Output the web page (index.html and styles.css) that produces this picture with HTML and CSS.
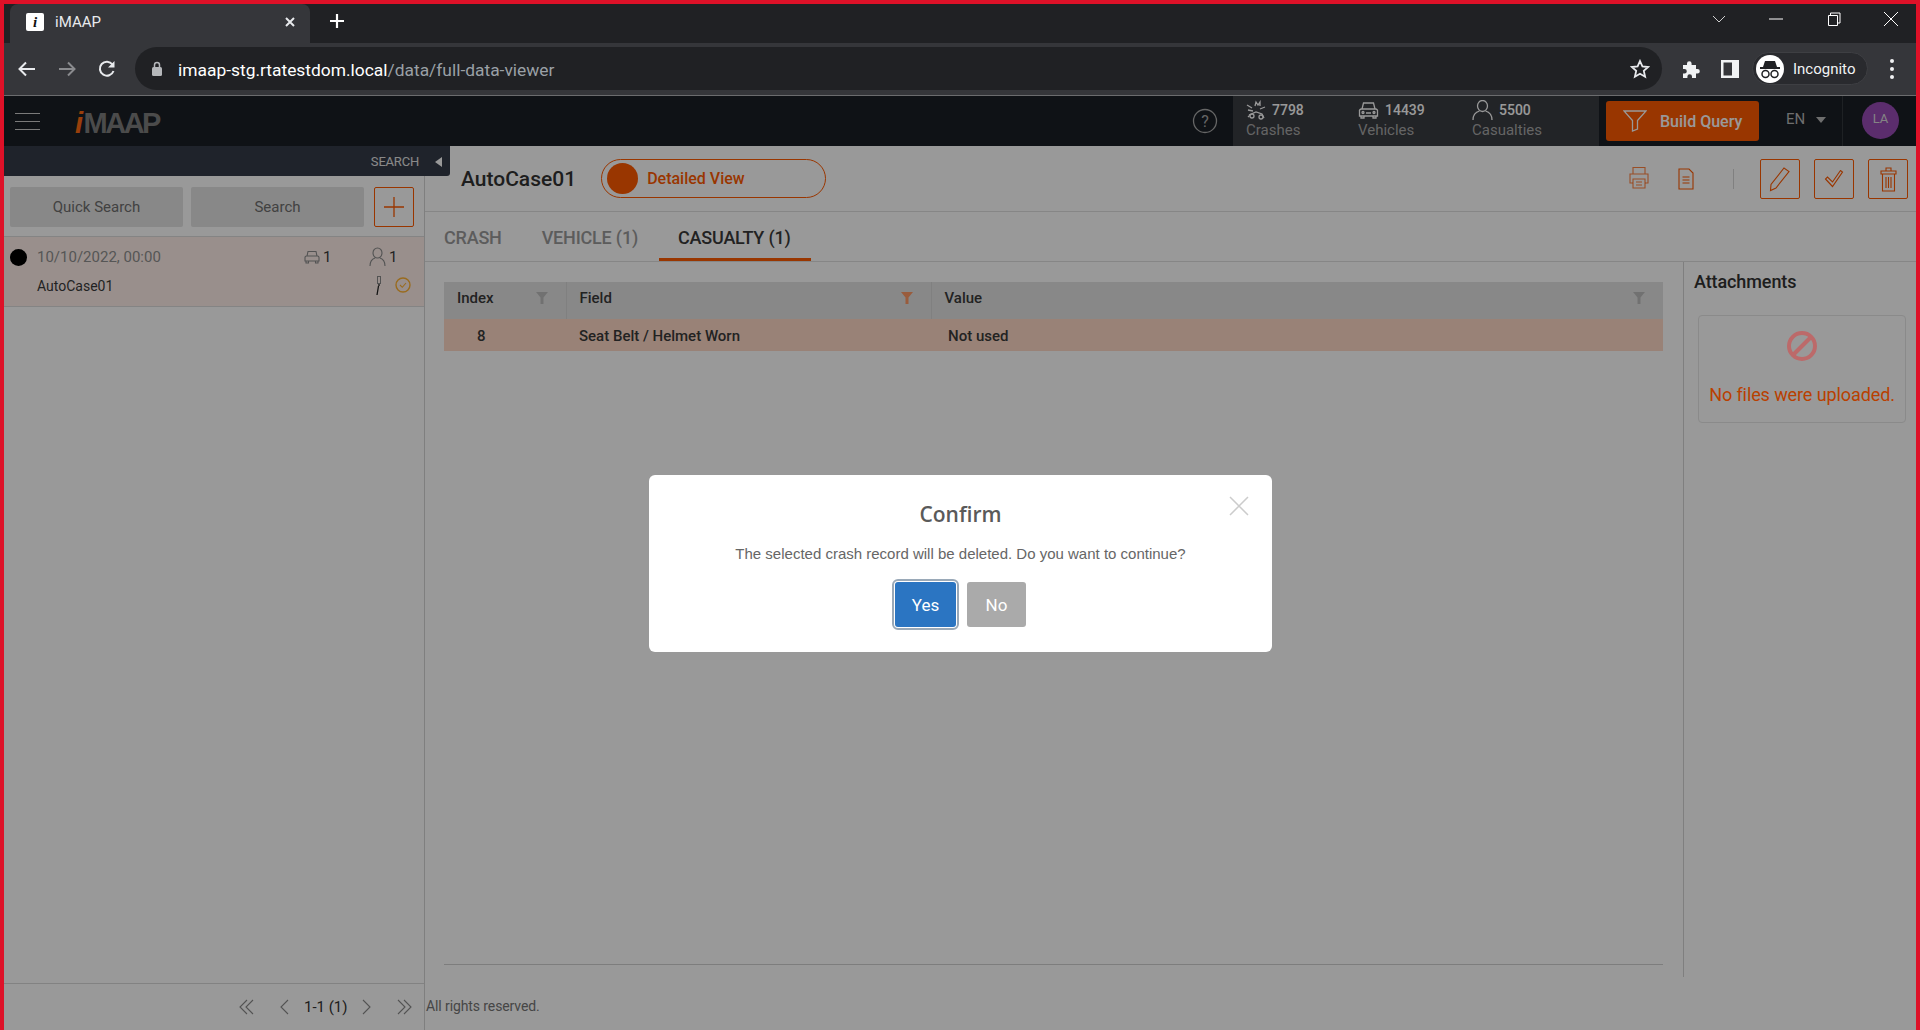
FILE: index.html
```html
<!DOCTYPE html>
<html>

<head>
    <title>iMAAP</title>
    <link rel="stylesheet" href="styles.css">
</head>

<body>
    <!-- browser chrome -->
    <div class="tabstrip">
        <div class="tab">
            <span class="favicon">i</span>
            <span class="tab-title">iMAAP</span>
            <svg class="tab-close" width="12" height="12" viewBox="0 0 12 12"><path d="M2 2l8 8M10 2l-8 8" stroke="#e8eaed" stroke-width="2" /></svg>
        </div>
        <svg class="new-tab" width="16" height="16" viewBox="0 0 16 16"><path d="M8 1v14M1 8h14" stroke="#fff" stroke-width="2.2" /></svg>
        <div class="win-btns">
            <svg width="14" height="10" viewBox="0 0 14 10"><path d="M1 2l6 6 6-6" fill="none" stroke="#d0d0d0" /></svg>
            <svg width="14" height="10" viewBox="0 0 14 10"><path d="M0 5h14" stroke="#fff" /></svg>
            <svg width="14" height="14" viewBox="0 0 14 14"><path d="M1.500 3.500h9v10h-9zM3.500 3.500v-2.500h9.500v10h-2.500" fill="none" stroke="#fff" /></svg>
            <svg width="14" height="14" viewBox="0 0 14 14"><path d="M0 0l14 14M14 0l-14 14" stroke="#fff" /></svg>
        </div>
    </div>
    <div class="toolbar">
        <svg class="nav-icon" width="18" height="16" viewBox="0 0 18 16"><path d="M17 8H2M8 1.500L1.500 8 8 14.500" fill="none" stroke="#e8eaed" stroke-width="2" /></svg>
        <svg class="nav-icon" width="18" height="16" viewBox="0 0 18 16"><path d="M1 8h15M10 1.500L16.500 8 10 14.500" fill="none" stroke="#8a8b8e" stroke-width="2" /></svg>
        <svg class="nav-icon" width="18" height="18" viewBox="0 0 18 18"><path d="M15.500 11a7 7 0 1 1-1-6.500" fill="none" stroke="#e8eaed" stroke-width="2" /><path d="M16.500 1v6.500H10z" fill="#e8eaed" /></svg>
        <div class="omnibox">
            <svg width="12" height="16" viewBox="0 0 12 16"><rect x="1" y="6" width="10" height="9" rx="1.500" fill="#b5b7ba" /><path d="M3.500 6V4a2.500 2.500 0 0 1 5 0v2" fill="none" stroke="#b5b7ba" stroke-width="1.500" /></svg>
            <span class="url">imaap-stg.rtatestdom.local<span class="url-path">/data/full-data-viewer</span></span>
            <svg class="star" width="20" height="20" viewBox="0 0 20 20"><path d="M10 2l2.400 5.400 5.800.6-4.400 3.900 1.300 5.800-5.100-3-5.100 3 1.300-5.800L1.800 8l5.800-.6z" fill="none" stroke="#e8eaed" stroke-width="1.800" /></svg>
        </div>
        <svg class="puzzle" width="20" height="20" viewBox="0 0 20 20"><path d="M2 6h4V4.500a2.300 2.300 0 0 1 4.600 0V6h4.400v4h1.500a2.300 2.300 0 0 1 0 4.600H15V19h-4v-1.500a2.300 2.300 0 0 0-4.600 0V19H2v-4.500h1.500a2.300 2.300 0 0 0 0-4.600H2z" fill="#f1f3f4" /></svg>
        <svg class="panel-icon" width="18" height="18" viewBox="0 0 18 18"><path fill-rule="evenodd" d="M0 0h18v18H0zM2.500 2.500v13H11v-13z" fill="#f1f3f4" /></svg>
        <div class="incognito">
            <span class="incog-face">
                <svg width="24" height="24" viewBox="0 0 24 24"><path d="M7 4h10l2 6H5z" fill="#202124" /><path d="M2 11h20" stroke="#202124" stroke-width="2" /><circle cx="7.500" cy="17" r="3.500" fill="none" stroke="#202124" stroke-width="1.500" /><circle cx="16.500" cy="17" r="3.500" fill="none" stroke="#202124" stroke-width="1.500" /></svg>
            </span>
            <span>Incognito</span>
        </div>
        <div class="kebab"><i></i><i></i><i></i></div>
    </div>

    <!-- app -->
    <div class="app">
        <header class="app-header">
            <div class="hamburger"><i></i><i></i><i></i></div>
            <div class="logo"><span>i</span>MAAP</div>
            <svg class="help" width="26" height="26" viewBox="0 0 26 26"><circle cx="13" cy="13" r="11.500" fill="none" stroke="#aaa" stroke-width="1.300" /><text x="13" y="18.500" text-anchor="middle" font-family="Roboto" font-size="16" fill="#aaa">?</text></svg>
            <div class="stats">
                <div class="stat stat-crash">
                    <div class="stat-num">
                        <svg width="20" height="20" viewBox="0 0 20 20"><g fill="none" stroke="#fff" stroke-width="1.300"><path d="M1 5l5 3M2 10l5 1M9 6l1-4 2 3 2-3 0 4M14 9l5-2M3 15l7-3 6 2 2 4M2 17l2-2" /><circle cx="6" cy="16" r="2" /><circle cx="15" cy="17" r="2" /></g></svg>
                        7798
                    </div>
                    <div class="stat-label">Crashes</div>
                </div>
                <div class="stat stat-vehicle">
                    <div class="stat-num">
                        <svg width="21" height="20" viewBox="0 0 21 20"><g fill="none" stroke="#fff" stroke-width="1.300"><path d="M4 9l1.500-6h10L17 9M1.500 11.500a2 2 0 0 1 2-2.500h14a2 2 0 0 1 2 2.500V16h-18zM3 16v2h3v-2M15 16v2h3v-2M8 13h5" /><circle cx="5" cy="12.500" r="1" /><circle cx="16" cy="12.500" r="1" /></g></svg>
                        14439
                    </div>
                    <div class="stat-label">Vehicles</div>
                </div>
                <div class="stat">
                    <div class="stat-num">
                        <svg width="21" height="20" viewBox="0 0 21 20"><g fill="none" stroke="#fff" stroke-width="1.300"><ellipse cx="10.500" cy="6" rx="5" ry="5.500" /><path d="M1 20c0-5 3-8 6.500-9M20 20c0-5-3-8-6.500-9" /></g></svg>
                        5500
                    </div>
                    <div class="stat-label">Casualties</div>
                </div>
            </div>
            <button class="build-query">
                <svg width="24" height="22" viewBox="0 0 24 22"><path d="M1 1h22l-8.500 9.500V19l-5 2V10.500z" fill="none" stroke="#fff" stroke-width="1.300" /></svg>
                Build Query
            </button>
            <div class="lang">EN<span class="caret"></span></div>
            <div class="user"><span class="avatar">LA</span></div>
        </header>

        <div class="app-body">
            <aside class="sidebar">
                <div class="search-bar">
                    <span>SEARCH</span>
                    <span class="collapse-arrow"></span>
                </div>
                <div class="search-btns">
                    <button class="grey-btn">Quick Search</button>
                    <button class="grey-btn">Search</button>
                    <button class="plus-btn">
                        <svg width="20" height="20" viewBox="0 0 20 20"><path d="M10 0v20M0 10h20" stroke="#ff5a00" stroke-width="1.300" /></svg>
                    </button>
                </div>
                <div class="case-row">
                    <div class="case-line">
                        <span class="dot"></span>
                        <span class="case-date">10/10/2022, 00:00</span>
                        <span class="case-count count-car">
                            <svg width="16" height="14" viewBox="0 0 16 14"><g fill="none" stroke="#8a8a8a" stroke-width="1.100"><path d="M3 6l1-4.500h8L13 6M1 7.500A1.500 1.500 0 0 1 2.500 6h11A1.500 1.500 0 0 1 15 7.500V11H1zM2 11v2h2.500v-2M11.500 11v2H14v-2" /></g></svg>
                            1
                        </span>
                        <span class="case-count">
                            <svg width="17" height="20" viewBox="0 0 17 20"><g fill="none" stroke="#8a8a8a" stroke-width="1.100"><ellipse cx="8.500" cy="6" rx="4.500" ry="5" /><path d="M1 19c0-4 2-7 5-8M16 19c0-4-2-7-5-8" /></g></svg>
                            1
                        </span>
                    </div>
                    <div class="case-line case-line2">
                        <span class="case-name">AutoCase01</span>
                        <svg class="belt" width="8" height="20" viewBox="0 0 8 20"><rect x="3.500" y="0.500" width="3" height="7" fill="none" stroke="#8a8a8a" /><path d="M5 8v2M4.500 10L3 19" stroke="#222" stroke-width="1.300" /></svg>
                        <svg class="case-ok" width="16" height="16" viewBox="0 0 16 16"><circle cx="8" cy="8" r="7" fill="none" stroke="#ffb233" stroke-width="1.400" /><path d="M5 8l2.300 2.300L11 6" fill="none" stroke="#ffb233" stroke-width="1.100" /></svg>
                    </div>
                </div>
                <div class="pager">
                    <svg width="16" height="16" viewBox="0 0 16 16"><path d="M8 1L1 8l7 7M14 1L7 8l7 7" fill="none" stroke="#8a8a8a" stroke-width="1.100" /></svg>
                    <svg class="pg-prev" width="10" height="16" viewBox="0 0 10 16"><path d="M9 1L2 8l7 7" fill="none" stroke="#8a8a8a" stroke-width="1.100" /></svg>
                    <span class="pg-text">1-1 (1)</span>
                    <svg class="pg-next" width="10" height="16" viewBox="0 0 10 16"><path d="M1 1l7 7-7 7" fill="none" stroke="#8a8a8a" stroke-width="1.100" /></svg>
                    <svg class="pg-last" width="16" height="16" viewBox="0 0 16 16"><path d="M2 1l7 7-7 7M8 1l7 7-7 7" fill="none" stroke="#8a8a8a" stroke-width="1.100" /></svg>
                </div>
            </aside>

            <main class="main">
                <div class="case-head">
                    <h2 class="case-title">AutoCase01</h2>
                    <div class="view-pill"><span class="pill-knob"></span>Detailed View</div>
                    <div class="case-tools">
                        <svg class="tool-print" width="20" height="24" viewBox="0 0 20 24"><g fill="none" stroke="#ff5a00" stroke-opacity=".75" stroke-width="1.100"><path d="M4 8V1.500h12V8M4 17H1V8h18v9h-3" /><path d="M4 13h12v9H4zM7 16h6M7 19h6" /></g></svg>
                        <svg class="tool-doc" width="16" height="22" viewBox="0 0 16 22"><g fill="none" stroke="#ff5a00" stroke-width="1.100"><path d="M1 1h10l4 4v16H1zM4.500 9h7M4.500 12h7M4.500 15h7" /></g></svg>
                        <span class="tool-sep"></span>
                        <button class="icon-btn"><svg width="22" height="26" viewBox="0 0 22 26"><path d="M1.500 24.500l.5-6L15 2l5 3.500L7 22z" fill="none" stroke="#ff5a00" stroke-width="1.100" /></svg></button>
                        <button class="icon-btn"><svg width="20" height="18" viewBox="0 0 20 18"><path d="M1.500 9l7 7.500L18.500 2l-2-1.500-8 11.500-5-5z" fill="none" stroke="#ff5a00" stroke-width="1.100" /></svg></button>
                        <button class="icon-btn"><svg width="17" height="26" viewBox="0 0 17 26"><g fill="none" stroke="#ff5a00" stroke-width="1.100"><path d="M1 5h15v3H1zM6 5V2h5v3M2.500 8v17h12V8M6 11v11M8.500 11v11M11 11v11" /></g></svg></button>
                    </div>
                </div>

                <nav class="tabs">
                    <a class="tabs-item">CRASH</a>
                    <a class="tabs-item">VEHICLE (1)</a>
                    <a class="tabs-item active">CASUALTY (1)</a>
                </nav>

                <div class="content">
                    <div class="records">
                        <table class="grid">
                            <thead>
                                <tr>
                                    <th class="col-index"><div class="th-in">Index<svg width="12" height="12" viewBox="0 0 12 12"><path d="M0 0h12L7.500 5.500V12h-3V5.500z" fill="#bdbdbd" /></svg></div></th>
                                    <th class="col-field"><div class="th-in">Field<svg width="12" height="12" viewBox="0 0 12 12"><path d="M0 0h12L7.500 5.500V12h-3V5.500z" fill="#ff9a66" /></svg></div></th>
                                    <th><div class="th-in">Value<svg width="12" height="12" viewBox="0 0 12 12"><path d="M0 0h12L7.500 5.500V12h-3V5.500z" fill="#bdbdbd" /></svg></div></th>
                                </tr>
                            </thead>
                            <tbody>
                                <tr>
                                    <td class="cell-index">8</td>
                                    <td class="cell-field">Seat Belt / Helmet Worn</td>
                                    <td class="cell-value">Not used</td>
                                </tr>
                            </tbody>
                        </table>
                        <div class="records-rule"></div>
                    </div>
                    <div class="attachments">
                        <h3>Attachments</h3>
                        <div class="no-files">
                            <svg class="ban" width="30" height="30" viewBox="0 0 30 30"><circle cx="15" cy="15" r="13" fill="none" stroke="#bc6a6a" stroke-width="4" /><path d="M6 24L24 6" stroke="#bc6a6a" stroke-width="4" /></svg>
                            <p>No files were uploaded.</p>
                        </div>
                    </div>
                </div>
                <footer class="page-foot">All rights reserved.</footer>
            </main>
        </div>

        <!-- confirm dialog -->
        <div class="backdrop">
            <div class="dialog">
                <svg class="dialog-close" width="20" height="20" viewBox="0 0 20 20"><path d="M1 1l18 18M19 1L1 19" stroke="#ccc" stroke-width="1.500" /></svg>
                <h4>Confirm</h4>
                <p>The selected crash record will be deleted. Do you want to continue?</p>
                <div class="dialog-btns">
                    <button class="yes">Yes</button>
                    <button class="no">No</button>
                </div>
            </div>
        </div>
    </div>
</body>

</html>
```

FILE: styles.css
```css
* {
    box-sizing: border-box;
}

html,
body {
    height: 1030px;
    overflow: hidden;
}

body {
    margin: 0;
    padding: 4px 4px 0 4px;
    background-color: #de1128;
    font-family: Roboto, "Liberation Sans", sans-serif;
    display: flex;
    flex-direction: column;
}

button {
    font-family: inherit;
    border: none;
}

h2,
h3,
h4,
p {
    margin: 0;
}

/* browser chrome */

.tabstrip {
    height: 39px;
    flex: none;
    background-color: #202124;
    display: flex;
    align-items: center;
}

.tab {
    width: 300px;
    height: 39px;
    margin-left: 6px;
    padding: 0 0 4px 16px;
    background-color: #35363a;
    border-radius: 8px 8px 0 0;
    display: flex;
    align-items: center;
}

.favicon {
    width: 18px;
    height: 18px;
    background-color: #fff;
    border-radius: 2px;
    color: #111;
    font: italic bold 15px/18px "Liberation Serif", serif;
    text-align: center;
}

.tab-title {
    margin-left: 11px;
    width: 229px;
    font-size: 15px;
    color: #e8eaed;
}

.new-tab {
    margin: -5px 0 0 19px;
}

.win-btns {
    margin-left: auto;
    width: 204px;
    padding-right: 18px;
    display: flex;
    justify-content: space-between;
    align-items: center;
    margin-top: -9px;
}

.toolbar {
    height: 53px;
    flex: none;
    background-color: #35363a;
    border-bottom: 1px solid #6b6c6e;
    display: flex;
    align-items: center;
    padding-bottom: 1px;
}

.nav-icon {
    margin-left: 14px;
    margin-right: 8px;
}

.nav-icon:first-child {
    margin-left: 14px;
}

.omnibox {
    width: 1527px;
    height: 43px;
    margin-left: 11px;
    padding: 0 12px 0 16px;
    background-color: #202124;
    border-radius: 22px;
    display: flex;
    align-items: center;
}

.url {
    margin: 2px 0 0 15px;
    font-size: 17.400px;
    color: #fff;
}

.url-path {
    color: #9aa0a6;
}

.star {
    margin-left: auto;
}

.puzzle {
    margin-left: 19px;
}

.panel-icon {
    margin-left: 20px;
}

.incognito {
    width: 116px;
    height: 33px;
    margin-left: 13px;
    padding-left: 3px;
    background-color: #292a2e;
    border: 1px solid #3e3f43;
    border-radius: 17px;
    color: #f1f3f4;
    font-size: 15px;
    display: flex;
    align-items: center;
    gap: 9px;
}

.incog-face {
    width: 28px;
    height: 28px;
    background-color: #fff;
    border-radius: 50%;
    display: flex;
    align-items: center;
    justify-content: center;
}

.kebab {
    margin-left: 22px;
    display: flex;
    flex-direction: column;
    gap: 4px;
}

.kebab i {
    width: 4px;
    height: 4px;
    background-color: #f1f3f4;
    border-radius: 50%;
}

/* app frame */

.app {
    flex: 1;
    position: relative;
    background-color: #fff;
    display: flex;
    flex-direction: column;
    min-height: 0;
}

.backdrop {
    position: absolute;
    inset: 0;
    background-color: rgba(0, 0, 0, 0.4);
    z-index: 10;
}

/* HEAD */

.app-header {
    height: 50px;
    flex: none;
    background-color: #191e25;
    display: flex;
    align-items: center;
}

.hamburger {
    width: 25px;
    margin-left: 11px;
    display: flex;
    flex-direction: column;
    gap: 7px;
}

.hamburger i {
    height: 1px;
    background-color: #ccc;
}

.logo {
    margin: 5px 0 0 35px;
    font: bold 29px "Liberation Sans", sans-serif;
    letter-spacing: -2.500px;
    color: #7e7e7e;
}

.logo span {
    font-style: italic;
    color: #ff6a13;
    margin-right: 3px;
}

.help {
    margin-left: auto;
}

.stats {
    width: 366px;
    height: 50px;
    flex: none;
    margin-left: 15px;
    padding: 4px 0 0 13px;
    background-color: #393c42;
    display: flex;
}

.stat {
    width: 114px;
}

.stat-crash {
    width: 112px;
}

.stat-num {
    height: 20px;
    font-size: 14px;
    font-weight: 500;
    color: #fff;
    display: flex;
    align-items: center;
    gap: 6px;
}

.stat-label {
    height: 20px;
    font-size: 15px;
    line-height: 20px;
    color: #a8a8a8;
}

.build-query {
    width: 153px;
    height: 40px;
    flex: none;
    margin-left: 7px;
    padding-left: 17px;
    background-color: #ff5a00;
    border-radius: 3px;
    color: #fff;
    font-size: 16px;
    font-weight: 500;
    display: flex;
    align-items: center;
    gap: 13px;
}

.lang {
    width: 84px;
    height: 50px;
    flex: none;
    padding: 14px 0 0 27px;
    font-size: 15px;
    color: #b8b8b8;
    border-right: 1px solid #33373d;
    display: flex;
    align-items: flex-start;
}

.caret {
    margin: 7px 0 0 11px;
    border: 5px solid transparent;
    border-top: 6px solid #b8b8b8;
    border-bottom: 0;
}

.user {
    width: 73px;
    flex: none;
    padding-left: 2px;
    display: flex;
    justify-content: center;
}

.avatar {
    width: 37px;
    height: 37px;
    margin-top: -1px;
    background-color: #984cb6;
    border-radius: 50%;
    color: #ddd;
    font-size: 13px;
    line-height: 34px;
    text-align: center;
}

.app-body {
    flex: 1;
    display: flex;
    min-height: 0;
}

/* sidebar */

.sidebar {
    width: 421px;
    flex: none;
    border-right: 1px solid #d4d4d4;
    display: flex;
    flex-direction: column;
}

.search-bar {
    height: 30px;
    flex: none;
    margin-right: -26px;
    position: relative;
    z-index: 2;
    padding-right: 8px;
    background-color: #343b49;
    border-radius: 0 0 3px 0;
    color: #e5e5e5;
    font-size: 13px;
    letter-spacing: -0.200px;
    display: flex;
    align-items: center;
    justify-content: flex-end;
}

.collapse-arrow {
    margin: 2px 0 0 16px;
    border: 5px solid transparent;
    border-right: 7px solid #fff;
    border-left: 0;
}

.search-btns {
    height: 61px;
    flex: none;
    padding: 11px 6px 0 6px;
    display: flex;
    border-bottom: 1px solid #dcdcdc;
}

.grey-btn {
    width: 173px;
    height: 40px;
    margin-right: 8px;
    background-color: #e3e3e3;
    border-radius: 2px;
    color: #6e6e6e;
    font-size: 15px;
}

.plus-btn {
    width: 40px;
    height: 40px;
    margin-left: 2px;
    background-color: transparent;
    border: 1px solid #ff5a00;
    border-radius: 2px;
    display: flex;
    align-items: center;
    justify-content: center;
}

.case-row {
    height: 70px;
    flex: none;
    padding-top: 10px;
    background-color: #ffefea;
    border-bottom: 1px solid #dcdcdc;
    color: #3a3a3a;
}

.case-line {
    height: 20px;
    padding-left: 6px;
    display: flex;
    align-items: center;
}

.dot {
    width: 17px;
    height: 17px;
    background-color: #000;
    border-radius: 50%;
}

.case-date {
    width: 267px;
    margin-left: 10px;
    font-size: 15px;
    color: #8f8f8f;
}

.case-count {
    display: flex;
    align-items: center;
    gap: 3px;
    font-size: 15px;
}

.count-car {
    width: 65px;
}

.case-line2 {
    margin-top: 9px;
    padding-left: 33px;
}

.case-name {
    width: 337px;
    font-size: 14px;
}

.case-ok {
    margin: -2px 0 0 13px;
}

.pager {
    margin-top: auto;
    height: 47px;
    flex: none;
    padding-left: 235px;
    border-top: 1px solid #d9d9d9;
    display: flex;
    align-items: center;
}

.pg-prev {
    margin-left: 24px;
}

.pg-text {
    margin-left: 15px;
    font-size: 15px;
    color: #333;
}

.pg-next {
    margin-left: 14px;
}

.pg-last {
    margin-left: 24px;
}

/* main */

.main {
    flex: 1;
    min-width: 0;
    display: flex;
    flex-direction: column;
}

.case-head {
    height: 66px;
    flex: none;
    padding-left: 36px;
    border-bottom: 1px solid #e0e0e0;
    display: flex;
    align-items: center;
}

.case-title {
    font-size: 21px;
    font-weight: 500;
    color: #333;
}

.view-pill {
    width: 225px;
    height: 39px;
    margin-left: 25px;
    padding-left: 5px;
    border: 1px solid #ff5a00;
    border-radius: 20px;
    color: #ff5a00;
    font-size: 16px;
    font-weight: 500;
    display: flex;
    align-items: center;
    gap: 9px;
}

.pill-knob {
    width: 31px;
    height: 31px;
    background-color: #ff5a00;
    border-radius: 50%;
}

.case-tools {
    margin-left: auto;
    padding-right: 8px;
    display: flex;
    align-items: center;
}

.tool-print {
    margin-top: -2px;
}

.tool-doc {
    margin-left: 29px;
}

.tool-sep {
    width: 1px;
    height: 20px;
    margin: 0 26px 0 39px;
    background-color: #d5d5d5;
}

.icon-btn {
    width: 40px;
    height: 40px;
    margin-left: 14px;
    background-color: transparent;
    border: 1px solid #ff5a00;
    border-radius: 2px;
    display: flex;
    align-items: center;
    justify-content: center;
}

.tool-sep + .icon-btn {
    margin-left: 0;
}

/* TABS */

.tabs {
    height: 50px;
    flex: none;
    border-bottom: 1px solid #e0e0e0;
    display: flex;
    gap: 2px;
}

.tabs-item {
    height: 49px;
    padding: 0 19px;
    font-size: 18px;
    font-weight: 500;
    letter-spacing: -0.200px;
    line-height: 52px;
    color: #9a9a9a;
}

.tabs-item.active {
    color: #3a3a3a;
    border-bottom: 3px solid #ff5a00;
    padding-right: 20px;
}

/* TABLE */

.content {
    height: 715px;
    flex: none;
    display: flex;
}

.records {
    width: 1258px;
    flex: none;
    padding: 20px 20px 0 19px;
    display: flex;
    flex-direction: column;
}

.grid {
    width: 100%;
    border-collapse: collapse;
    table-layout: fixed;
    font-size: 15px;
    color: #3a3a3a;
}

.grid th {
    height: 37px;
    padding: 0 18px 5px 13px;
    background-color: #e3e3e3;
    font-weight: 500;
    text-align: left;
    border-left: 1px solid #d6d6d6;
}

.grid th:first-child {
    border-left: 0;
}

.th-in {
    display: flex;
    justify-content: space-between;
    align-items: center;
}

.col-index {
    width: 122px;
}

.col-field {
    width: 365px;
}

.grid td {
    height: 32px;
    padding-top: 2px;
    background-color: #ffd9c6;
    font-weight: 500;
}

.grid td.cell-index {
    padding-left: 33px;
}

.grid td.cell-field {
    padding-left: 13px;
}

.grid td.cell-value {
    padding-left: 17px;
}

.records-rule {
    margin-top: auto;
    margin-bottom: 12px;
    border-top: 1px solid #d0d0d0;
}

.attachments {
    flex: 1;
    padding: 8px 10px 0 10px;
    border-left: 1px solid #d4d4d4;
}

.attachments h3 {
    font-size: 18px;
    font-weight: 500;
    letter-spacing: -0.100px;
    line-height: 24px;
    color: #333;
}

.no-files {
    width: 208px;
    height: 108px;
    margin: 21px 0 0 4px;
    padding-top: 15px;
    border: 1px solid #e6e6e6;
    border-radius: 4px;
    text-align: center;
}

/* these two read brighter than the mask lets through */
.ban,
.no-files p {
    position: relative;
    z-index: 11;
}

.no-files p {
    margin-top: 19px;
    font-size: 18px;
    letter-spacing: -0.100px;
    color: #b94000;
}

.page-foot {
    flex: 1;
    padding-left: 1px;
    padding-top: 21px;
    font-size: 14px;
    letter-spacing: -0.100px;
    color: #757575;
}

/* dialog */

.dialog {
    position: absolute;
    left: 645px;
    top: 379px;
    width: 623px;
    height: 177px;
    padding-top: 26px;
    background-color: #fff;
    border-radius: 6px;
    text-align: center;
}

.dialog-close {
    position: absolute;
    right: 23px;
    top: 21px;
}

.dialog h4 {
    font: 600 21px/26px "Open Sans", sans-serif;
    color: #5a5a5a;
}

.dialog p {
    margin-top: 15px;
    font: 15px/24px "Liberation Sans", sans-serif;
    color: #666;
}

.dialog-btns {
    margin-top: 16px;
    display: flex;
    justify-content: center;
    gap: 11px;
}

.dialog-btns button {
    height: 45px;
    border-radius: 3px;
    color: #fff;
    font-size: 17px;
}

.yes {
    width: 61px;
    background-color: #2b75c2;
    outline: 2px solid #9aa9b8;
    outline-offset: 1px;
}

.no {
    width: 59px;
    background-color: #aaa;
}
```
